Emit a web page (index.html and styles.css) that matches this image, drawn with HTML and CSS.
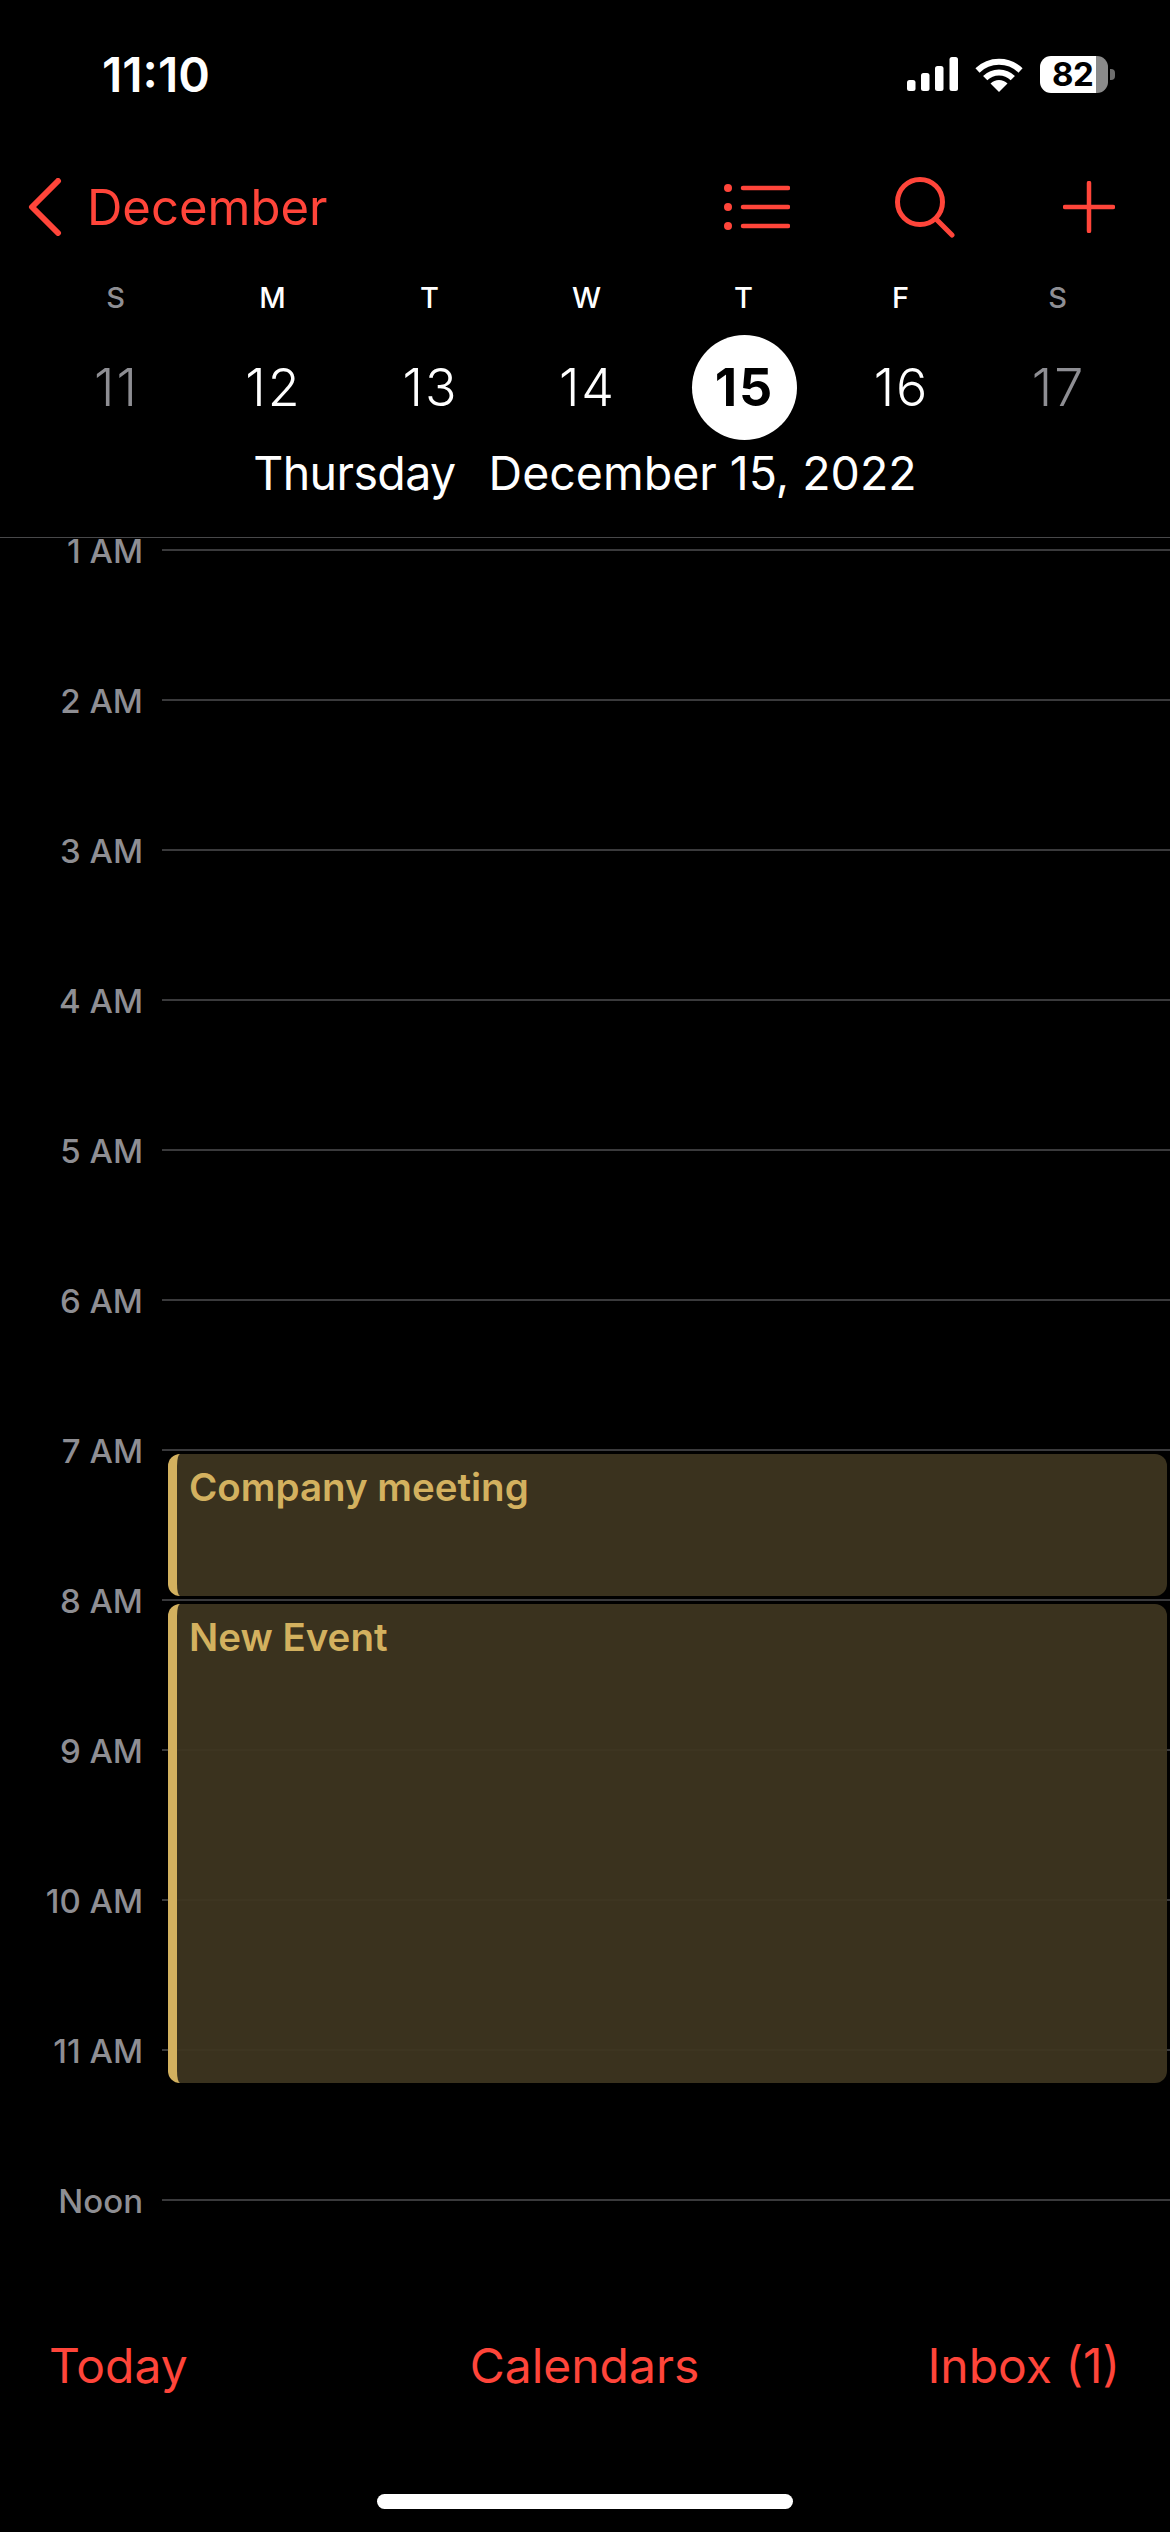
FILE: index.html
```html
<!DOCTYPE html>
<html lang="en">
<head>
    <meta charset="UTF-8">
    <meta name="viewport" content="width=device-width, initial-scale=1.0">
    <title>Calendar</title>
    <link rel="stylesheet" href="styles.css">
</head>
<body>

<header class="top">
    <div class="status">
        <span class="clock">11:10</span>
        <div class="status-icons">
            <svg class="signal" width="51" height="34" viewBox="0 0 51 34" fill="#fff">
                <rect x="0" y="23" width="8.5" height="11" rx="2.5"/>
                <rect x="14" y="16" width="8.5" height="18" rx="2.5"/>
                <rect x="28" y="9" width="8.5" height="25" rx="2.5"/>
                <rect x="42.5" y="0" width="8.5" height="34" rx="2.5"/>
            </svg>
            <svg class="wifi" width="48" height="35" viewBox="0 0 48 35" fill="none" stroke="#fff" stroke-width="6">
                <path d="M2.5 13.5a31 31 0 0 1 43 0"/>
                <path d="M10.2 21.2a19.5 19.5 0 0 1 27.6 0"/>
                <path d="M24 35L15.5 26.5a12 12 0 0 1 17 0Z" fill="#fff" stroke="none"/>
            </svg>
            <div class="battery">
                <div class="battery-body"><span class="battery-level">82</span></div>
                <div class="battery-nub"></div>
            </div>
        </div>
    </div>

    <nav class="nav">
        <a class="back">
            <svg width="34" height="58" viewBox="0 0 34 58" fill="none" stroke="#ff453a" stroke-width="6" stroke-linecap="round" stroke-linejoin="round">
                <path d="M30 3L4 29L30 55"/>
            </svg>
            <span>December</span>
        </a>
        <div class="nav-actions">
            <svg class="icon-list" width="66" height="46" viewBox="0 0 66 46" fill="none" stroke="#ff453a" stroke-width="4.5" stroke-linecap="round">
                <path d="M19 4H64M19 23H64M19 42H64"/>
                <g fill="#ff453a" stroke="none">
                    <circle cx="4" cy="4" r="4"/>
                    <circle cx="4" cy="23" r="4"/>
                    <circle cx="4" cy="42" r="4"/>
                </g>
            </svg>
            <svg class="icon-search" width="60" height="61" viewBox="0 0 60 61" fill="none" stroke="#ff453a" stroke-width="5" stroke-linecap="round">
                <circle cx="25" cy="25" r="22.5"/>
                <path d="M41 42L57 58"/>
            </svg>
            <svg class="icon-plus" width="52" height="52" viewBox="0 0 52 52" fill="none" stroke="#ff453a" stroke-width="4.5" stroke-linecap="round">
                <path d="M26 2V50M2 26H50"/>
            </svg>
        </div>
    </nav>

    <div class="week week-letters">
        <span class="muted">S</span><span>M</span><span>T</span><span>W</span><span>T</span><span>F</span><span class="muted">S</span>
    </div>
    <div class="week week-days">
        <span class="muted">11</span>
        <span>12</span>
        <span>13</span>
        <span>14</span>
        <span><b class="today">15</b></span>
        <span>16</span>
        <span class="muted">17</span>
    </div>
    <div class="date-title">
        <span class="date-weekday">Thursday</span>
        <span>December 15, 2022</span>
    </div>
</header>

<main class="timeline">
    <div class="hour"><span class="hour-label">1 AM</span><i class="hour-line"></i></div>
    <div class="hour"><span class="hour-label">2 AM</span><i class="hour-line"></i></div>
    <div class="hour"><span class="hour-label">3 AM</span><i class="hour-line"></i></div>
    <div class="hour"><span class="hour-label">4 AM</span><i class="hour-line"></i></div>
    <div class="hour"><span class="hour-label">5 AM</span><i class="hour-line"></i></div>
    <div class="hour"><span class="hour-label">6 AM</span><i class="hour-line"></i></div>
    <div class="hour"><span class="hour-label">7 AM</span><i class="hour-line"></i></div>
    <div class="hour"><span class="hour-label">8 AM</span><i class="hour-line"></i></div>
    <div class="hour"><span class="hour-label">9 AM</span><i class="hour-line"></i></div>
    <div class="hour"><span class="hour-label">10 AM</span><i class="hour-line"></i></div>
    <div class="hour"><span class="hour-label">11 AM</span><i class="hour-line"></i></div>
    <div class="hour"><span class="hour-label">Noon</span><i class="hour-line"></i></div>

    <div class="event event-meeting">Company meeting</div>
    <div class="event event-new">New Event</div>
</main>

<footer class="toolbar">
    <div class="toolbar-links">
        <a>Today</a>
        <a>Calendars</a>
        <a class="inbox">Inbox (1)</a>
    </div>
    <div class="home-bar"></div>
</footer>

</body>
</html>
```

FILE: styles.css
```css
* {
    box-sizing: border-box;
}

html, body {
    margin: 0;
    height: 100%;
}

body {
    width: 1170px;
    height: 2532px;
    display: flex;
    flex-direction: column;
    overflow: hidden;
    background: #000;
    color: #fff;
    font-family: Inter, "Liberation Sans", sans-serif;
}

/* Header */
.top {
    flex: none;
    height: 538px;
    border-bottom: 1px solid #48484a;
}

.status {
    height: 148px;
    padding: 0 55px 0 102px;
    display: flex;
    align-items: center;
    justify-content: space-between;
}

.clock {
    font-size: 48px;
    font-weight: 600;
}

.status-icons {
    display: flex;
    align-items: center;
    gap: 17px;
}

.battery {
    display: flex;
    align-items: center;
    gap: 2px;
}

.battery-body {
    width: 68px;
    height: 37px;
    border-radius: 11px;
    background: linear-gradient(90deg, #fff 82%, #8a8a8a 82%);
    display: flex;
    align-items: center;
    padding-left: 12px;
}

.battery-level {
    color: #000;
    font-size: 33px;
    font-weight: 700;
    letter-spacing: -0.5px;
}

.battery-nub {
    width: 5px;
    height: 11px;
    border-radius: 0 4px 4px 0;
    background: #6e6e6e;
}

.nav {
    height: 118px;
    padding: 0 55px 0 28px;
    display: flex;
    align-items: center;
    justify-content: space-between;
    color: #ff453a;
}

.back {
    display: flex;
    align-items: center;
    gap: 25px;
    font-size: 49px;
}

.nav-actions {
    display: flex;
    align-items: center;
}

.icon-search {
    margin-left: 105px;
}

.icon-plus {
    margin-left: 108px;
}

.week {
    display: grid;
    grid-template-columns: repeat(7, 157px);
    padding: 0 37px;
    text-align: center;
}

.week-letters {
    height: 62px;
    align-items: center;
    font-size: 29px;
    font-weight: 500;
}

.week-days {
    height: 118px;
    padding-left: 38px;
    align-items: center;
    font-size: 52px;
    font-weight: 300;
    letter-spacing: 2px;
}

.muted {
    color: #8e8e93;
}

.today {
    width: 105px;
    height: 105px;
    margin: 0 auto;
    border-radius: 50%;
    background: #fff;
    color: #000;
    font-weight: 700;
    display: flex;
    align-items: center;
    justify-content: center;
}

.date-title {
    height: 54px;
    display: flex;
    align-items: center;
    justify-content: center;
    gap: 33px;
    font-size: 46.5px;
    font-weight: 400;
}

.date-weekday {
    letter-spacing: -0.6px;
}

/* Day grid */
.timeline {
    flex: 1;
    min-height: 0;
    position: relative;
}

.hour {
    height: 150px;
    display: flex;
}

.hour-label {
    flex: none;
    width: 143px;
    height: 26px;
    line-height: 26px;
    text-align: right;
    font-size: 33px;
    font-weight: 500;
    color: #8e8e93;
}

.hour-line {
    flex: 1;
    height: 2px;
    margin: 11px 0 0 19px;
    background: #3a3a3c;
}

.event {
    position: absolute;
    left: 168px;
    right: 3px;
    padding: 10px 0 0 12px;
    border-left: 9px solid #d3b15f;
    border-radius: 12px;
    background: rgba(61, 53, 32, 0.95);
    color: #d3b15f;
    font-size: 38.5px;
    font-weight: 600;
}

.event-meeting {
    top: 916px;
    height: 142px;
}

.event-new {
    top: 1066px;
    height: 479px;
}

/* Bottom */
.toolbar {
    flex: none;
    position: relative;
    height: 232px;
    background: #000;
    padding-top: 36px;
}

.toolbar-links {
    padding: 0 50px 0 49px;
    display: grid;
    grid-template-columns: 1fr auto 1fr;
    font-size: 48px;
    color: #ff453a;
}

.inbox {
    justify-self: end;
}

.home-bar {
    width: 416px;
    height: 15px;
    margin: 99px auto 0;
    border-radius: 8px;
    background: #fff;
}
```
